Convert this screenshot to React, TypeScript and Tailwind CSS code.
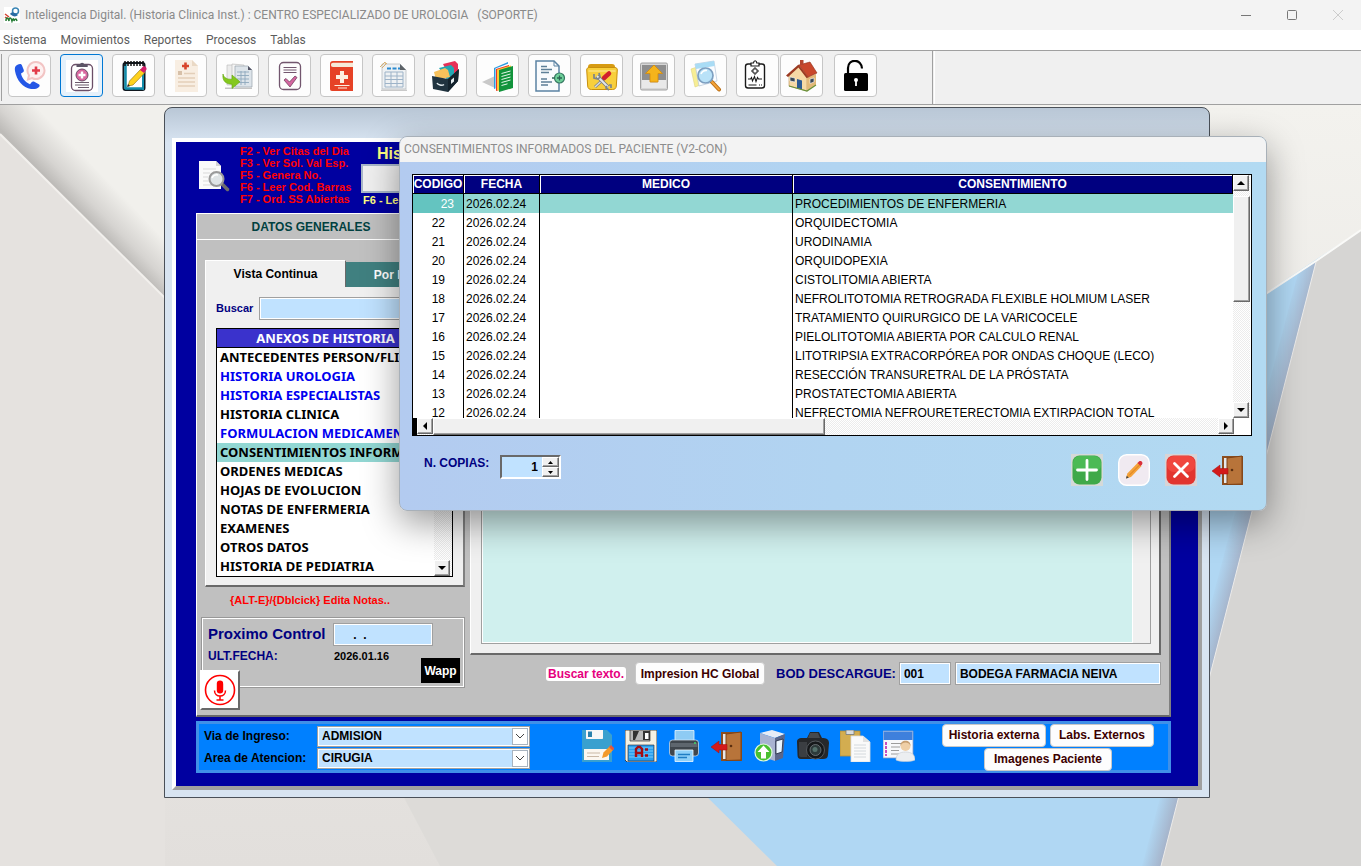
import type { ReactNode } from "react";

const raised = "border border-t-white border-l-white border-r-[#696969] border-b-[#696969] bg-[#f0f0f0] shadow-[inset_-1px_-1px_0_#a0a0a0]";
const dither = "bg-[repeating-conic-gradient(#ffffff_0_25%,#ececec_0_50%)] bg-[length:2px_2px]";
const sans = "font-['Liberation_Sans',Arial,sans-serif]";
const noto = "font-['Noto_Sans',Tahoma,sans-serif]";
const roboto = "font-[Roboto,'Segoe_UI',sans-serif]";

function Svg({ children, box = "0 0 32 32", className = "size-8" }: { children: ReactNode; box?: string; className?: string }) {
  return (
    <svg viewBox={box} className={className} aria-hidden="true" fill="none">
      {children}
    </svg>
  );
}

/* ---------- toolbar icons ---------- */

const PhoneIcon = () => (
  <Svg>
    <path d="M3 5c-2 1-2.500 3-2 6 1.500 9 8 17 16 18 3 .3 6 0 8-2 1-1 .8-2-.2-2.700l-4.500-2.500c-1-.6-2-.4-2.700.4l-1.600 2C11 22 8 18 7 13.500l2-1.300c.9-.6 1-1.500.7-2.500L8 5.500C7.500 4 6 3.500 3 5Z" fill="#2457e6" />
    <path d="M22 2a8.500 8.500 0 1 1-4 16l-4 1.500 1-4.200A8.500 8.500 0 0 1 22 2Z" stroke="#f2c4c4" strokeWidth="2" fill="#fdf1f1" />
    <path d="M22 6.500v8M18 10.500h8" stroke="#e23b4a" strokeWidth="2.600" />
  </Svg>
);

const ClipboardPlusIcon = () => (
  <Svg>
    <rect width="32" height="32" fill="#fff" />
    <rect x="5.500" y="4.500" width="21" height="26" rx="4" stroke="#6b4f68" strokeWidth="1.300" />
    <path d="M10.500 7V4.500h3.300a2.400 2.400 0 0 1 4.600 0h3.300V7Z" fill="#5c5566" />
    <circle cx="16" cy="15" r="6" fill="#d9679f" stroke="#6b4f68" />
    <path d="M16 11.500v7M12.500 15h7" stroke="#fff" strokeWidth="2.400" />
    <path d="M9 22.500h14M9 25h14M12 27.500h11" stroke="#6b5a6b" />
  </Svg>
);

const NotepadIcon = () => (
  <Svg>
    <rect x="5.500" y="3" width="21" height="27" rx="2" fill="#fff" stroke="#101820" strokeWidth="2" />
    <path d="M7.500 4v25M7 28.500h18" stroke="#128cab" strokeWidth="2.500" />
    <path d="M25 8v22" stroke="#128cab" strokeWidth="2" />
    <path d="M7 1v5M10 1v5M13 1v5M16 1v5M19 1v5M22 1v5M25 1v5" stroke="#111" strokeWidth="1.500" />
    <path d="M10 26l1.500-5L23 9l4 3.500L15 25Z" fill="#ffd21f" stroke="#8a6a00" strokeWidth=".6" />
    <path d="M22 10l3-3.500c2-1 4 1 3.500 3L26 13Z" fill="#d31d69" />
    <path d="M9 27l1-3 2 2Z" fill="#222" />
  </Svg>
);

const RecordIcon = () => (
  <Svg>
    <path d="M5 0h17l6 6v26H5Z" fill="#f8eee2" />
    <path d="M22 0v6h6Z" fill="#ead9c5" />
    <path d="M15.500 2.500v7M12 6h7" stroke="#d8452b" strokeWidth="2.600" />
    <rect x="8" y="11" width="4" height="4" fill="#d7c0a8" />
    <path d="M14 13.500h11M8 18h17M8 22h17M8 26h17" stroke="#e3cfb9" strokeWidth="1.300" />
  </Svg>
);

const ExportSheetIcon = () => (
  <Svg>
    <path d="M5 5h10v20H5Z" fill="#ececec" stroke="#bbb" strokeWidth=".6" />
    <path d="M10 4l12 1v20H10Z" fill="#f4f4f4" stroke="#b5b5b5" strokeWidth=".6" />
    <path d="M13 6h13l4 4v17H13Z" fill="#dde4ea" stroke="#9aa5ad" strokeWidth=".7" />
    <path d="M26 6l4 4h-4Z" fill="#556" />
    <path d="M15 12h12M15 15.500h12M15 19h12M15 22.500h12M19 11v14M23 11v14" stroke="#8fa8bd" strokeWidth=".9" />
    <path d="M3 27.500h27V29H3Z" fill="#c4c4c4" />
    <path d="M1 14c1 4 4 5.500 9 5.200V15l8 6.800-8 6.700v-4.300C4 24.200 0 21 1 14Z" fill="#84c81e" stroke="#63a60e" strokeWidth=".6" />
  </Svg>
);

const ChecklistIcon = () => (
  <Svg>
    <rect x="5.500" y="2.500" width="21" height="27" rx="4" stroke="#72566e" strokeWidth="1.300" />
    <path d="M9.500 7.500h13M9.500 10h13M9.500 12.500h13" stroke="#72566e" />
    <path d="M10 20l2-1.500 3.500 3.500L21 16l2 1.500L16 27Z" fill="#d466a0" stroke="#72415f" strokeWidth=".8" />
  </Svg>
);

const RedBookIcon = () => (
  <Svg>
    <path d="M4 4c0-2 1-3 3-3h20v30H6c-1.300 0-2-1-2-2.300Z" fill="#e64226" />
    <path d="M5 5c0-1.600.8-2.300 2.200-2.300H27V7H7C5.500 7 5 6.300 5 5Z" fill="#f6ead8" />
    <path d="M16 11v12M10 17h12" stroke="#fdf0e0" strokeWidth="4" />
    <path d="M8.500 25.500h15M12 28h9" stroke="#fdf0e0" strokeWidth="1.200" />
  </Svg>
);

const SpreadsheetIcon = () => (
  <Svg>
    <path d="M4 4h18l6 6v19H4Z" fill="#eef1f3" stroke="#b6bcc0" strokeWidth=".8" />
    <path d="M22 4l6 6h-6Z" fill="#5d6368" />
    <path d="M9 8.500h4M14.500 8.500h4M20 8.500h2" stroke="#2a8ad0" strokeWidth="2" />
    <path d="M7 12h18v15H7ZM7 16h18M7 19.500h18M7 23.500h18M13 12v15M19 12v15" stroke="#9db3c8" />
    <path d="M2 7l5-5 1 2-4 4M4 8l5-5" stroke="#d9b070" />
    <path d="M3 29.500h26V31H3Z" fill="#c9c9c9" />
  </Svg>
);

const CardBoxIcon = () => (
  <Svg>
    <path d="M13 4l12-3 3 3v10l-8 4Z" fill="#e73158" />
    <path d="M9 8l12-3 3 3v9l-6 4Z" fill="#23a7b4" />
    <path d="M4 12l11-4 3 2 2 7-14 3Z" fill="#f7c15b" />
    <path d="M2 16l16 3 11-10-1 12-10 11-15-3Z" fill="#20333f" />
    <path d="M18 19l11-10-1 12-10 11Z" fill="#14232d" />
    <path d="M7 23c1 2 5 3 7 1.500" stroke="#dfe8ec" strokeWidth="1.500" />
    <path d="M21 20l3-2.500v4l-3 2.500Z" fill="#e6eef2" />
  </Svg>
);

const GreenBooksIcon = () => (
  <Svg>
    <path d="M0 22l13-6v12Z" fill="#c9c9c9" />
    <path d="M12 8l14-6v22l-14 5Z" fill="#2c9be0" />
    <path d="M13.500 8.500l13-5v22l-13 5Z" fill="#fff" />
    <path d="M14 9l13-4v22l-13 4Z" fill="#e8352c" />
    <path d="M15 9.500l14-4v23l-14 2Z" fill="#ffc933" />
    <path d="M17 10l14-4v22l-14 4Z" fill="#12943c" />
    <path d="M19.500 13.500l9-2.500M19.500 16.500l9-2.500M19.500 19.500l9-2.500M19.500 22.500l9-2.500M19.500 25.500l6-1.700" stroke="#e5f7e9" />
  </Svg>
);

const DocTargetIcon = () => (
  <Svg>
    <path d="M2 1h18l5 5v25H2Z" fill="#f9fbfd" stroke="#5b83a3" strokeWidth="1.500" />
    <path d="M20 1v5h5" stroke="#5b83a3" />
    <path d="M7 6.500h6M7 9.500h11M7 12.500h8M7 19h6M7 22h11M7 25h7" stroke="#5e7f97" strokeWidth="1.300" />
    <circle cx="25.500" cy="18" r="5" fill="#6fd19a" stroke="#377a63" strokeWidth="1.200" />
    <path d="M25.500 15.500v5M23 18h5M18 18h2.500" stroke="#2d6654" strokeWidth="1.300" />
  </Svg>
);

const ToolFolderIcon = () => (
  <Svg>
    <path d="M2 7c0-2 1-3 3-3h21c2 0 3 1 3 3v5H2Z" fill="#d79b12" />
    <path d="M.7 10c0-1.500.8-2.500 2.500-2.500h25.600c1.700 0 2.500 1 2.500 2.500l-1 16c-.2 2.500-1.500 3.500-4 3.500H5.700c-2.500 0-3.800-1-4-3.500Z" fill="#f8cf3c" stroke="#c88f0d" />
    <path d="M2.500 11h27" stroke="#fdeb9c" />
    <path d="M9 27L20 17" stroke="#7c8288" strokeWidth="3" />
    <path d="M9 27L20 17" stroke="#d7dce0" strokeWidth="1.500" />
    <path d="M18 18l5-4.500" stroke="#d2202d" strokeWidth="4.500" strokeLinecap="round" />
    <path d="M11 16l11 11" stroke="#73797f" strokeWidth="3.500" />
    <path d="M11 16l11 11" stroke="#e3e7ea" strokeWidth="2" />
    <path d="M8 14v4l4 1 2-2-1-4M21 26l-1 2 3 2M23 25h2v3" stroke="#7e858b" strokeWidth="1.700" />
  </Svg>
);

const OutboxIcon = () => (
  <Svg>
    <rect x="2.500" y="3" width="27" height="27" rx="1.500" fill="#d6d6d6" stroke="#a2a2a2" />
    <path d="M4 5h24v15H4Z" fill="#8e8e8e" />
    <path d="M4 20h7l2 3h6l2-3h7v8H4Z" fill="#e9e9e9" />
    <path d="M16 5l8.500 8.500H20V22h-8v-8.500H7.500Z" fill="#f5b41b" stroke="#d68c0a" strokeWidth=".8" />
  </Svg>
);

const SearchDocIcon = () => (
  <Svg>
    <path d="M1 9l9-3 6 17-11 4Z" fill="#f7ee95" stroke="#d9cf77" strokeWidth=".5" />
    <path d="M5 4l19-3 3 20-18 5Z" fill="#fafcff" stroke="#b4c6d8" strokeWidth=".7" />
    <path d="M5 4l19-3 .7 5L6 9Z" fill="#a9dcf5" />
    <path d="M22 22l7 7.500" stroke="#b96c12" strokeWidth="4" strokeLinecap="round" />
    <path d="M22 22l7 7.500" stroke="#f3a33a" strokeWidth="2" strokeLinecap="round" />
    <circle cx="15.500" cy="15.500" r="7.500" fill="#b9e2f8" stroke="#7d9fc0" strokeWidth="1.700" />
    <path d="M11 14c1-3 4-4 6-3.500" stroke="#fff" strokeWidth="1.600" />
  </Svg>
);

const VitalsIcon = () => (
  <Svg>
    <rect x="3.500" y="4" width="19" height="24" rx="2.500" fill="#fff" stroke="#1a1a1a" strokeWidth="1.400" />
    <path d="M9 6V3h2.500c.3-3 3-3 3.300 0H17v3Z" fill="#fff" stroke="#1a1a1a" strokeWidth="1.200" />
    <path d="M12 8h2v2h2v2h-2v2h-2v-2h-2v-2h2Z" stroke="#1a1a1a" />
    <path d="M6 19h2.500l1-1.500 1 3.500 2-4.500 1.500 5 1.500-4 1 1.500H20" stroke="#1a1a1a" strokeWidth="1.100" />
    <path d="M6.500 25h8M17 25h1M19 25h1" stroke="#1a1a1a" strokeWidth="1.200" />
  </Svg>
);

const HouseIcon = () => (
  <Svg>
    <path d="M3 15l9-9 9 11v14L3 26Z" fill="#f6d9a6" stroke="#b98d52" strokeWidth=".6" />
    <path d="M21 17l9-3v11l-9 6Z" fill="#e2b878" />
    <path d="M13 5l11-3 7 11-9 4Z" fill="#c9472c" stroke="#8f2c18" strokeWidth=".6" />
    <path d="M12.500 4.500L0 15.500l2 1.500L12.500 7.500l8 10.500 2-.5Z" fill="#9c3a22" />
    <path d="M14 0h3.500v5H14Z" fill="#b4452e" />
    <path d="M11 19l5 1.500v9L11 28Z" fill="#2d5b93" />
    <path d="M4 17l5 1v4l-5-1ZM24 19l4-1v4l-4 1.500Z" fill="#3a4856" stroke="#fff" strokeWidth=".6" />
    <path d="M3 26l7 2 11 3 9-6" stroke="#67913a" strokeWidth="1.200" />
  </Svg>
);

const UnlockIcon = () => (
  <Svg>
    <rect x="4" y="13" width="24" height="18" rx="1.500" fill="#000" />
    <path d="M8 13.500V8C8 3 11.500.8 15 .8S22 4 22 8.500" stroke="#000" strokeWidth="2.200" />
    <circle cx="16" cy="20" r="2" fill="#fff" />
    <path d="M16 20v6" stroke="#fff" strokeWidth="1.800" />
  </Svg>
);

/* ---------- action icons ---------- */

const DoorIcon = () => (
  <Svg>
    <path d="M10 2h21v29H10Z" fill="#8d4e1f" />
    <path d="M12 4h6v25h-6Z" fill="#e6e9ec" />
    <path d="M15 4l15-2v28l-15 .5Z" fill="#b8743a" stroke="#7e4317" />
    <circle cx="20" cy="16" r="1.300" fill="#5b2f10" />
    <path d="M0 17l8-6v3.500h8v5.500H8v3Z" fill="#d31b1b" stroke="#a90d0d" strokeWidth=".5" />
  </Svg>
);

const AddIcon = () => (
  <Svg>
    <rect width="32" height="32" fill="#d5d9d8" />
    <rect x="1.500" y="1.500" width="29" height="29" rx="7" fill="#3fa949" />
    <rect x="2" y="2" width="28" height="16" rx="7" fill="#4cba55" />
    <path d="M16 6.500v19M6.500 16h19" stroke="#fff" strokeWidth="2.800" strokeLinecap="round" />
  </Svg>
);

const EditIcon = () => (
  <Svg>
    <rect x=".7" y=".7" width="30.600" height="30.600" rx="8" fill="#f0eaf1" stroke="#fff" strokeWidth="1.400" />
    <path d="M8 24.500l1.300-5L20 8.500l3.600 3.500L13 23Z" fill="#f4a23b" />
    <path d="M11 21.500L22 10.500" stroke="#d97f1c" />
    <path d="M19.500 9l1.500-1.500c2-1.500 4.500 1 3 3L22.500 12Z" fill="#d9303b" />
    <path d="M8 24.500l.8-2.700 2 2Z" fill="#444" />
  </Svg>
);

const DeleteIcon = () => (
  <Svg>
    <rect width="32" height="32" fill="#d8d4d6" />
    <rect x="1.500" y="1.500" width="29" height="29" rx="7" fill="#e2352f" />
    <rect x="2" y="2" width="28" height="16" rx="7" fill="#f0473f" />
    <path d="M9.500 9.500l13 13M22.500 9.500l-13 13" stroke="#fff" strokeWidth="2.800" strokeLinecap="round" />
  </Svg>
);

const SaveEditIcon = () => (
  <Svg>
    <path d="M0 0h25l5 5v27H0Z" fill="#39a0cf" />
    <path d="M4 0h17v8c0 .6-.4 1-1 1H5c-.6 0-1-.4-1-1Z" fill="#f7f7f7" />
    <path d="M6 1.500h4v5.500H6Z" fill="#2b81ac" />
    <path d="M2 19h25v11H2Z" fill="#fbf7f0" />
    <path d="M5 23h13M5 26.500h12" stroke="#c9b9a6" />
    <path d="M20 28l1.500-5.500L28 16l3.500 3.500L25 26.500Z" fill="#f39a2b" />
    <path d="M27 17l2-2 3.500 3.500-2 2Z" fill="#e2583e" />
  </Svg>
);

const FloppyIcon = () => (
  <Svg>
    <path d="M0 0h32v32H2l-2-2Z" fill="#f4f1e4" stroke="#222" strokeWidth=".8" />
    <path d="M5 0h20v11H5Z" fill="#b9b9b9" stroke="#333" strokeWidth=".7" />
    <path d="M8 1h6l-4 9H8ZM18 1h7v9h-7Z" fill="#333" />
    <path d="M20 3h3.500v6H20Z" fill="#fff" />
    <path d="M3 15h26v16H3Z" fill="#2a9ff0" stroke="#223" strokeWidth=".6" />
    <path d="M4 18h24M4 21h24M4 24h24M4 27h24" stroke="#8fd8fb" strokeWidth=".8" />
    <path d="M11 27v-8l2-2h2l2 2v8M11 23h6" stroke="#a40c12" strokeWidth="2.400" />
    <path d="M20 19.500h3M20 25.500h3" stroke="#a40c12" strokeWidth="2.500" />
  </Svg>
);

const PrinterIcon = () => (
  <Svg>
    <path d="M7 .5h19V14H7Z" fill="#8ecbf4" stroke="#e9f6fe" strokeWidth=".8" />
    <rect x="1.500" y="10" width="29" height="16" rx="3" fill="#3f464d" stroke="#d8e8f6" strokeWidth=".7" />
    <path d="M2.500 13h27v4h-27Z" fill="#5e666e" />
    <path d="M26 13h2" stroke="#41d66c" strokeWidth="1.500" />
    <path d="M7 20h18v11.500H7Z" fill="#8fd0f8" stroke="#f1faff" strokeWidth=".8" />
    <path d="M10 24.500h12M10 27.500h9" stroke="#1f7dc4" strokeWidth="1.500" />
  </Svg>
);

const UploadPcIcon = () => (
  <Svg>
    <path d="M6 3l12-3 13 4-10 4Z" fill="#e7ecf6" />
    <path d="M6 3l15 5v23L6 26Z" fill="#a8b3d2" />
    <path d="M21 8l10-4-2 24-8 3Z" fill="#5b668a" />
    <path d="M22 11l7-2-1 13-6 2Z" fill="#e9f4ff" stroke="#20283c" strokeWidth=".8" />
    <circle cx="9.500" cy="22.500" r="8.500" fill="#48c030" stroke="#e2f9dc" strokeWidth="1.200" />
    <path d="M9.500 15.500l6 6.500H12v6.500H7V22H3.500Z" fill="#fff" />
  </Svg>
);

const CameraIcon = () => (
  <Svg>
    <path d="M0 12c0-3 2-4 5-4h5l3-6h9l3 6c4 0 7 1 7 5l-1 12c-.3 3-2 4-5 4H4c-2.500 0-3.500-1.500-3.500-4Z" fill="#26282b" />
    <path d="M13 3h8l2 5H11Z" fill="#46494d" />
    <path d="M2 12h8v15H4c-1.500 0-2-1-2-2Z" fill="#3b3e42" />
    <circle cx="18.500" cy="20" r="9" fill="#16181a" stroke="#55595e" />
    <circle cx="18.500" cy="20" r="5.500" fill="#2d3a3a" stroke="#777c80" strokeWidth=".8" />
    <circle cx="18" cy="19.500" r="2.500" fill="#54706a" />
  </Svg>
);

const PasteIcon = () => (
  <Svg>
    <path d="M0 1h20v25H0Z" fill="#d3ad50" stroke="#b48e37" strokeWidth=".8" />
    <path d="M6 0h8v4.500H6Z" fill="#d9dcde" stroke="#74787b" strokeWidth=".8" />
    <path d="M11 6h12l7 6v20H11Z" fill="#fafafa" stroke="#dcdcdc" strokeWidth=".8" />
    <path d="M23 6v6h7Z" fill="#e1e1e1" />
    <path d="M14 15h12M14 18h12M14 21h12M14 24h12M14 27h12" stroke="#d0d6da" strokeWidth=".9" />
  </Svg>
);

const PatientCardIcon = () => (
  <Svg>
    <path d="M0 1h30v27H0Z" fill="#f7f8fb" stroke="#7d98c8" strokeWidth=".8" />
    <path d="M.5 1.500h29V10H.5Z" fill="#3f80dc" />
    <path d="M8 13.500h11M8 17h9M8 20.500h8M8 24h8" stroke="#9c9c9c" />
    <path d="M3 12v3M3 16v3M3 20v3M3 24v2" stroke="#bf24ae" strokeWidth="1.600" />
    <circle cx="22.500" cy="16" r="5" fill="#efcfa7" />
    <path d="M17.500 16c-.5-7 10.500-7 10 0-1-3-3-3.500-5-3.500s-4 .5-5 3.500Z" fill="#c79f72" />
    <path d="M13 30c0-6 4-8 9.500-8S32 24 32 30c-4 2-15 2-19 0Z" fill="#eceef1" stroke="#c6cbd1" strokeWidth=".6" />
  </Svg>
);

const FindPageIcon = () => (
  <Svg>
    <path d="M0 1h17l5 5v23H0Z" fill="#fafafa" />
    <path d="M17 1v5h5Z" fill="#d3d3d3" />
    <path d="M4 9h13M4 13h7M4 17h5M4 21h6M4 25h10" stroke="#d9d9d9" />
    <path d="M23 24l5.500 5.500" stroke="#6d6d6d" strokeWidth="3.500" strokeLinecap="round" />
    <circle cx="17.500" cy="19" r="7" fill="#dfe4e6" stroke="#9a9a9a" strokeWidth="2" />
    <path d="M13 18c1-3 4-3.500 6-3" stroke="#fff" strokeWidth="1.500" />
  </Svg>
);

const MicIcon = () => (
  <Svg>
    <circle cx="16" cy="16" r="14.500" stroke="#f00" strokeWidth="1.600" />
    <rect x="12.800" y="6.500" width="6.400" height="13" rx="3.200" fill="#f00" />
    <path d="M10.500 16.500c0 7.300 11 7.300 11 0M16 22v4M12.500 26h7" stroke="#f00" strokeWidth="1.500" />
  </Svg>
);

const AppLogo = () => (
  <Svg box="0 0 16 16" className="size-4">
    <rect width="16" height="16" fill="#fff" />
    <circle cx="11.500" cy="4" r="3" stroke="#3c86b5" strokeWidth="1.500" />
    <path d="M6 7c2-3 5-1 8 1-2 2-5 2-8-1Z" fill="#2b6ca3" />
    <path d="M1 7l4 3M1 10l3 2" stroke="#d4402f" strokeWidth="1.500" />
    <path d="M2 14c0-4 2-4 3 0 0-4 2-4 3 0 1-3 2-3 2 0 1-2 2-3 3 0" stroke="#227a33" strokeWidth="1.500" />
  </Svg>
);

/* ---------- small controls ---------- */

function Arrow({ dir }: { dir: "up" | "down" | "left" | "right" }) {
  const d = {
    up: "M3 9l4-4 4 4Z",
    down: "M3 5h8L7 9Z",
    left: "M9 3v8L5 7Z",
    right: "M5 3v8l4-4Z",
  }[dir];
  return (
    <Svg box="0 0 14 14" className="size-full">
      <path d={d} fill="#000" />
    </Svg>
  );
}

function ScrollButton({ dir, label }: { dir: "up" | "down" | "left" | "right"; label: string }) {
  return (
    <button aria-label={label} className={`size-4 shrink-0 ${raised}`}>
      <Arrow dir={dir} />
    </button>
  );
}

function Combo({ id, label, value }: { id: string; label: string; value: string }) {
  return (
    <div className="flex items-center">
      <label htmlFor={id} className="w-[113px] shrink-0">
        {label}
      </label>
      <div className="relative w-[213px]">
        <select id={id} className="block h-[21px] w-full appearance-none border border-[#a0a0a0] bg-[#c0e2ff] pl-1 font-bold ring-1 ring-white ring-inset">
          <option>{value}</option>
        </select>
        <span className="pointer-events-none absolute inset-y-0.5 right-0.5 flex w-4 items-center justify-center border border-[#a8b4c0] bg-white">
          <Svg box="0 0 10 6" className="h-1.5 w-2.5">
            <path d="M1 1l4 4 4-4" stroke="#444" />
          </Svg>
        </span>
      </div>
    </div>
  );
}

const soft = "h-[23px] rounded-[4px] border border-[#c8c8c8] bg-[#fdfdfd] font-bold text-[#3c0000]";
const field = "h-[23px] border border-[#a0a0a0] bg-[#c0e2ff] font-bold ring-1 ring-white ring-inset";

/* ---------- data ---------- */

const menus = ["Sistema", "Movimientos", "Reportes", "Procesos", "Tablas"];

const tools: [string, () => ReactNode][] = [
  ["Llamadas", PhoneIcon],
  ["Historia clinica", ClipboardPlusIcon],
  ["Notas", NotepadIcon],
  ["Registro", RecordIcon],
  ["Exportar", ExportSheetIcon],
  ["Lista", ChecklistIcon],
  ["Manual medico", RedBookIcon],
  ["Planilla", SpreadsheetIcon],
  ["Archivo", CardBoxIcon],
  ["Libros", GreenBooksIcon],
  ["Formulario", DocTargetIcon],
  ["Herramientas", ToolFolderIcon],
  ["Enviar", OutboxIcon],
  ["Consultar", SearchDocIcon],
  ["Signos vitales", VitalsIcon],
  ["Inicio", HouseIcon],
  ["Desbloquear", UnlockIcon],
];

const anexos: [string, boolean][] = [
  ["ANTECEDENTES PERSON/FLIA", false],
  ["HISTORIA UROLOGIA", true],
  ["HISTORIA ESPECIALISTAS", true],
  ["HISTORIA CLINICA", false],
  ["FORMULACION MEDICAMENTO", true],
  ["CONSENTIMIENTOS INFORMA", false],
  ["ORDENES MEDICAS", false],
  ["HOJAS DE EVOLUCION", false],
  ["NOTAS DE ENFERMERIA", false],
  ["EXAMENES", false],
  ["OTROS DATOS", false],
  ["HISTORIA DE PEDIATRIA", false],
];

const consents = [
  "PROCEDIMIENTOS DE ENFERMERIA",
  "ORQUIDECTOMIA",
  "URODINAMIA",
  "ORQUIDOPEXIA",
  "CISTOLITOMIA ABIERTA",
  "NEFROLITOTOMIA RETROGRADA FLEXIBLE HOLMIUM LASER",
  "TRATAMIENTO QUIRURGICO DE LA VARICOCELE",
  "PIELOLITOTOMIA ABIERTA POR CALCULO RENAL",
  "LITOTRIPSIA EXTRACORPÓREA POR ONDAS CHOQUE (LECO)",
  "RESECCIÓN TRANSURETRAL DE LA PRÓSTATA",
  "PROSTATECTOMIA ABIERTA",
  "NEFRECTOMIA NEFROURETERECTOMIA EXTIRPACION TOTAL",
];

const footerIcons: [string, () => ReactNode][] = [
  ["Guardar y editar", SaveEditIcon],
  ["Guardar", FloppyIcon],
  ["Imprimir", PrinterIcon],
  ["Salir", DoorIcon],
  ["Subir", UploadPcIcon],
  ["Camara", CameraIcon],
  ["Pegar", PasteIcon],
  ["Ficha paciente", PatientCardIcon],
];

/* ---------- regions ---------- */

function Wallpaper() {
  return (
    <svg viewBox="0 105 1361 761" preserveAspectRatio="none" className="absolute inset-0 size-full" aria-hidden="true">
      <defs>
        <linearGradient id="paper" x1="0" y1="0" x2="0" y2="1">
          <stop offset="0" stopColor="#f3f2ee" />
          <stop offset="1" stopColor="#e2dfdc" />
        </linearGradient>
        <linearGradient id="fold" gradientUnits="userSpaceOnUse" x1="83" y1="215" x2="113" y2="186">
          <stop offset="0" stopColor="#bdbbb8" />
          <stop offset=".35" stopColor="#d6d4d1" />
          <stop offset="1" stopColor="#f1f0ec" />
        </linearGradient>
        <linearGradient id="edge" gradientUnits="userSpaceOnUse" x1="1205" y1="620" x2="1228" y2="626">
          <stop offset="0" stopColor="#b0d7f3" />
          <stop offset="1" stopColor="#a3abc0" />
        </linearGradient>
      </defs>
      <rect y="105" width="1361" height="761" fill="url(#paper)" />
      <path d="M0 105h165v193L0 134Z" fill="url(#fold)" />
      <path d="M0 134l165 164v568H0Z" fill="#e5e2df" />
      <path d="M0 134l165 164" stroke="#f2f0ed" strokeWidth="2" />
      <path d="M400 790h313l74 76H440Z" fill="#dddbd8" />
      <path d="M1361 230L1100 402 700 790l77 76h390L1316 262Z" fill="#b0d7f3" />
      <path d="M1316 262l-18 11-156 593h26Z" fill="url(#edge)" />
      <path d="M1316 262l45-32v636h-200Z" fill="#d6d5d3" />
      <path d="M1361 230l-45 31-216 141" stroke="#fafaf8" strokeWidth="2" fill="none" />
      <path d="M1316 262l-155 604" stroke="#ecebea" strokeWidth="1" fill="none" />
    </svg>
  );
}

function AnexosPanel() {
  return (
    <div>
      <div className="flex items-end" role="tablist">
        <button role="tab" className="h-[27px] w-[141px] border-t border-r border-l border-t-white border-r-[#696969] border-l-white bg-[#f0f0f0] font-bold">
          Vista Continua
        </button>
        <button role="tab" className="h-[25px] flex-1 bg-[#408080] font-bold text-white">
          Por Evento
        </button>
      </div>
      <div className="border-r-2 border-b-2 border-l border-r-[#808080] border-b-[#696969] border-l-white bg-[#f0f0f0] px-[10px] pt-[10px] pb-[8px]">
        <div className="flex items-center">
          <label htmlFor="buscar" className="w-[43px] shrink-0 text-[11px] font-bold text-[#000080]">
            Buscar
          </label>
          <input id="buscar" className={`min-w-0 flex-1 ${field}`} />
        </div>
        <div className="mt-2 flex border border-black bg-white">
          <table className={`min-w-0 flex-1 table-fixed border-collapse text-[13px] font-bold ${noto}`}>
            <thead className="block">
              <tr className="block">
                <th className="block h-[19px] border-b border-black bg-[#3a32cc] pl-0 text-center leading-[19px] text-white">ANEXOS DE HISTORIA</th>
              </tr>
            </thead>
            <tbody className="block">
              {anexos.map(([name, blue], i) => (
                <tr key={name} className={`block ${i === 5 ? "bg-[#92d7d3]" : ""}`}>
                  <td className={`block h-[19px] pl-[3px] leading-[19px] whitespace-nowrap ${blue ? "text-[#0000f0]" : "text-black"}`}>{name}</td>
                </tr>
              ))}
            </tbody>
          </table>
          <div className={`flex w-[18px] shrink-0 flex-col items-start justify-between ${dither}`}>
            <ScrollButton dir="up" label="Subir lista" />
            <ScrollButton dir="down" label="Bajar lista" />
          </div>
        </div>
      </div>
    </div>
  );
}

function MainWindow() {
  return (
    <section className={`absolute top-[2px] right-[151px] left-[164px] min-w-[1000px] rounded-t-lg border border-[#4a5058] bg-linear-to-b from-[#b9c7d6] via-[#d8e4f1] via-5% to-[#d8e4f1] px-[7px] pt-[30px] pb-[7px] text-[12px] ${sans}`}>
      <div className="border-4 border-t-white border-r-[#a0a0a0] border-b-[#a0a0a0] border-l-white bg-[#0000a0] pr-[27px] pb-[13px] pl-5">
        <header className="flex h-[71px] items-start font-bold">
          <button aria-label="Buscar historia" className="mt-[18px] ml-[3px] size-8">
            <FindPageIcon />
          </button>
          <ul className="mt-[3px] ml-[9px] w-[121px] text-[11px] leading-[12px] whitespace-nowrap text-[#ff0000]">
            <li>F2 - Ver Citas del Dia</li>
            <li>F3 - Ver Sol. Val Esp.</li>
            <li>F5 - Genera No.</li>
            <li>F6 - Leer Cod. Barras</li>
            <li>F7 - Ord. SS Abiertas</li>
          </ul>
          <div className="mt-[2px] text-[#ffff80]">
            <label htmlFor="historia" className="block pl-4 text-[16px] leading-[20px]">
              Historia
            </label>
            <input id="historia" className="block h-[29px] w-[140px] border-2 border-[#a9b7c8] bg-[#f0f0f0]" />
            <p className="pl-0.5 text-[11px] leading-[14px]">F6 - Leer</p>
          </div>
        </header>

        <div className="border-t border-r-2 border-b-2 border-l border-t-white border-r-[#808080] border-b-[#696969] border-l-white bg-[#c0c0c0]">
          <div className="flex border-b border-white">
            <h2 className="h-[25px] w-[228px] text-center leading-[27px] font-bold text-[#004040]">DATOS GENERALES</h2>
          </div>
          <div className="flex gap-[5px] pr-2 pl-2">
            <div className="w-[260px] shrink-0 pt-5 pb-[27px]">
              <AnexosPanel />
              <p className="h-[30px] pl-[25px] text-[11px] leading-[26px] font-bold text-[#ff0000]">{"{ALT-E}/{Dblcick} Edita Notas.."}</p>
              <div className="relative -ml-1 h-[71px] border border-[#989898] ring-1 ring-white ring-inset">
                <div className="flex items-start pt-[5px] pl-[6px] font-bold text-[#000080]">
                  <label htmlFor="control" className="w-[125px] text-[15px] leading-[22px]">
                    Proximo Control
                  </label>
                  <input id="control" defaultValue=" .  . " className={`w-[100px] pl-4 text-black ${field}`} />
                </div>
                <div className="flex pl-[6px] leading-[20px]">
                  <span className="w-[126px] font-bold text-[#000080]">ULT.FECHA:</span>
                  <span className="text-[11px] font-bold">2026.01.16</span>
                </div>
                <button className="absolute right-1 bottom-1 h-[25px] w-[39px] bg-black font-bold text-white">Wapp</button>
                <button aria-label="Dictar" className="absolute top-[52px] -left-0.5 flex size-10 items-center justify-center border-2 border-t-white border-r-[#696969] border-b-[#696969] border-l-white bg-white">
                  <MicIcon />
                </button>
              </div>
            </div>
            <div className="flex min-w-0 flex-1 flex-col pb-[30px]">
              <div className="flex flex-1 border-r-2 border-b-2 border-l border-r-[#696969] border-b-[#696969] border-l-white bg-[#f0f0f0] pr-2 pb-[9px] pl-[10px]">
                <div className="flex flex-1 border border-[#a0a0a0]">
                  <textarea aria-label="Contenido" className="flex-1 resize-none border border-white bg-[#d0f0ee]" />
                  <div className="w-[17px] bg-[#f0f0f0]" />
                </div>
              </div>
              <div className="mt-[7px] flex items-center pl-[76px] whitespace-nowrap">
                <button className="rounded-[3px] bg-white px-0.5 leading-[14px] font-bold text-[#e6007e]">Buscar texto.</button>
                <button className={`ml-[9px] w-[130px] ${soft}`}>Impresion HC Global</button>
                <label htmlFor="bod" className="ml-[11px] text-[13px] font-bold text-[#000080]">
                  BOD DESCARGUE:
                </label>
                <input id="bod" defaultValue="001" className={`ml-[3px] w-[52px] pl-1 ${field}`} />
                <input aria-label="Bodega" defaultValue="BODEGA FARMACIA NEIVA" className={`ml-1 min-w-0 flex-1 pl-1 ${field}`} />
              </div>
            </div>
          </div>
        </div>

        <footer className="mt-1 flex h-[52px] items-center border-[3px] border-[#4090e8] bg-[#0080ff] pr-[14px] pl-[5px] font-bold">
          <div className="flex flex-col gap-px">
            <Combo id="via" label="Via de Ingreso:" value="ADMISION" />
            <Combo id="area" label="Area de Atencion:" value="CIRUGIA" />
          </div>
          <div className="mb-0.5 ml-[52px] flex gap-[11px]">
            {footerIcons.map(([name, Icon]) => (
              <button key={name} aria-label={name}>
                <Icon />
              </button>
            ))}
          </div>
          <div className="ml-auto flex w-[212px] flex-wrap justify-center gap-x-1 gap-y-px">
            <button className={`w-[104px] ${soft}`}>Historia externa</button>
            <button className={`w-[104px] ${soft}`}>Labs. Externos</button>
            <button className={`w-[128px] ${soft}`}>Imagenes Paciente</button>
          </div>
        </footer>
      </div>
    </section>
  );
}

function ConsentDialog() {
  const head = "h-[19px] border-r border-b border-black bg-[#000080] p-0 text-[12px] leading-[18px] font-bold text-white shadow-[inset_1px_1px_0_#ffffff]";
  const cell = "h-[19px] border-r border-black p-0 pl-0.5 leading-[18px] whitespace-nowrap";
  return (
    <section className={`absolute top-[31px] right-[94px] left-[399px] min-w-[700px] overflow-hidden rounded-lg border border-[#a8b0b8] bg-linear-to-r from-[#b3cbf0] via-[#b1d4f1] to-[#b2daf2] shadow-[0_12px_36px_rgba(0,0,0,0.4)] ${sans}`}>
      <h2 className={`h-[25px] bg-[#f3f3f3] pl-1 text-[12px] leading-[25px] text-[#8c8c8c] ${roboto}`}>CONSENTIMIENTOS INFORMADOS DEL PACIENTE (V2-CON)</h2>
      <div className="pt-3 pr-[14px] pb-[24px] pl-3">
        <div className="border border-black bg-white">
          <div className="flex h-[243px] overflow-hidden pr-px">
            <table className="w-full min-w-0 flex-1 table-fixed border-separate border-spacing-0 self-start text-[12px]">
              <colgroup>
                <col className="w-[51px]" />
                <col className="w-[76px]" />
                <col className="w-[253px]" />
                <col />
              </colgroup>
              <thead>
                <tr>
                  {["CODIGO", "FECHA", "MEDICO", "CONSENTIMIENTO"].map((h) => (
                    <th key={h} className={head}>
                      {h}
                    </th>
                  ))}
                </tr>
              </thead>
              <tbody>
                {consents.map((c, i) => (
                  <tr key={c} className={i === 0 ? "bg-[#92d7d3]" : "bg-white"}>
                    <td className={`h-[19px] border-r border-black p-0 text-right leading-[18px] ${i === 0 ? "bg-[#64c4c0] pr-[9px] text-white" : "pr-[18px]"}`}>{23 - i}</td>
                    <td className={cell}>2026.02.24</td>
                    <td className={cell}></td>
                    <td className="h-[19px] p-0 pl-0.5 leading-[18px] whitespace-nowrap">{c}</td>
                  </tr>
                ))}
              </tbody>
            </table>
            <div className={`flex w-[17px] flex-col ${dither}`}>
              <ScrollButton dir="up" label="Subir" />
              <div className={`mt-[5px] h-[106px] ${raised}`} />
              <div className="flex-1" />
              <ScrollButton dir="down" label="Bajar" />
            </div>
          </div>
          <div className={`mr-[17px] flex h-[17px] border-l-4 border-black ${dither}`}>
            <ScrollButton dir="left" label="Izquierda" />
            <div className={`h-[17px] w-[48%] ${raised}`} />
            <div className="flex-1" />
            <ScrollButton dir="right" label="Derecha" />
          </div>
        </div>
        <div className="mt-[18px] flex h-8 items-center pl-3 text-[12px] font-bold">
          <label htmlFor="copias" className="w-[76px] pb-[14px] text-[#000080]">
            N. COPIAS:
          </label>
          <div className="mb-[6px] flex h-6 w-[61px] border-2 border-t-[#696969] border-r-white border-b-white border-l-[#696969]">
            <input id="copias" defaultValue="1" className="min-w-0 flex-1 bg-[#c0e2ff] pr-1 text-right" />
            <div className="flex w-[17px] flex-col">
              <button aria-label="Aumentar" className={`flex flex-1 items-center justify-center ${raised}`}>
                <Svg box="0 0 5 3" className="h-[3px] w-[5px]">
                  <path d="M0 3h5L2.500 0Z" fill="#000" />
                </Svg>
              </button>
              <button aria-label="Disminuir" className={`flex flex-1 items-center justify-center ${raised}`}>
                <Svg box="0 0 5 3" className="h-[3px] w-[5px]">
                  <path d="M0 0h5L2.500 3Z" fill="#000" />
                </Svg>
              </button>
            </div>
          </div>
          <div className="mr-2 ml-auto flex gap-[15px]">
            <button aria-label="Agregar">
              <AddIcon />
            </button>
            <button aria-label="Editar">
              <EditIcon />
            </button>
            <button aria-label="Eliminar">
              <DeleteIcon />
            </button>
            <button aria-label="Salir">
              <DoorIcon />
            </button>
          </div>
        </div>
      </div>
    </section>
  );
}

export default function App() {
  return (
    <div className={`flex min-h-screen flex-col bg-white text-black ${roboto}`}>
      <header className="flex h-[30px] items-center bg-[#f3f3f3] pl-1 text-[12px] text-[#8a8a8a]">
        <AppLogo />
        <h1 className="ml-[5px] flex-1 whitespace-pre">{"Inteligencia Digital. (Historia Clinica Inst.) : CENTRO ESPECIALIZADO DE UROLOGIA   (SOPORTE)"}</h1>
        <button aria-label="Minimizar" className="flex w-[46px] justify-center">
          <Svg box="0 0 12 12" className="size-3">
            <path d="M1 6.500h10" stroke="#777" />
          </Svg>
        </button>
        <button aria-label="Maximizar" className="flex w-[46px] justify-center">
          <Svg box="0 0 12 12" className="size-3">
            <rect x="1.500" y="1.500" width="9" height="9" rx="1" stroke="#777" />
          </Svg>
        </button>
        <button aria-label="Cerrar" className="flex w-[46px] justify-center">
          <Svg box="0 0 12 12" className="size-3">
            <path d="M1 1l10 10M11 1L1 11" stroke="#ccc" />
          </Svg>
        </button>
      </header>
      <nav className="flex h-[20px] items-center gap-[14px] pl-[3px] text-[12px] text-[#5c5c5c]">
        {menus.map((m) => (
          <button key={m}>{m}</button>
        ))}
      </nav>
      <div className="flex h-[55px] border-y border-[#a0a0a0] bg-[#f0f0f0] pl-px">
        <div className="flex w-[932px] gap-[9px] border-r border-[#a0a0a0] pt-[3px]">
          <span className="h-[47px] border-l border-[#a0a0a0]" />
          {tools.map(([name, Icon], i) => (
            <button
              key={name}
              aria-label={name}
              className={`flex size-[43px] shrink-0 items-center justify-center rounded-[4px] border ${i === 0 ? "-ml-[3px]" : ""} ${i === 15 ? "-ml-2" : ""} ${i === 16 ? "ml-[2px]" : ""} ${i === 1 ? "border-[#0078d4] bg-[#e5f1fb]" : "border-[#c6c6c6] bg-[#fdfdfd]"}`}
            >
              <Icon />
            </button>
          ))}
        </div>
        <span className="ml-px border-l border-white" />
      </div>
      <main className="relative min-h-[720px] flex-1 overflow-hidden">
        <Wallpaper />
        <MainWindow />
        <ConsentDialog />
      </main>
    </div>
  );
}
